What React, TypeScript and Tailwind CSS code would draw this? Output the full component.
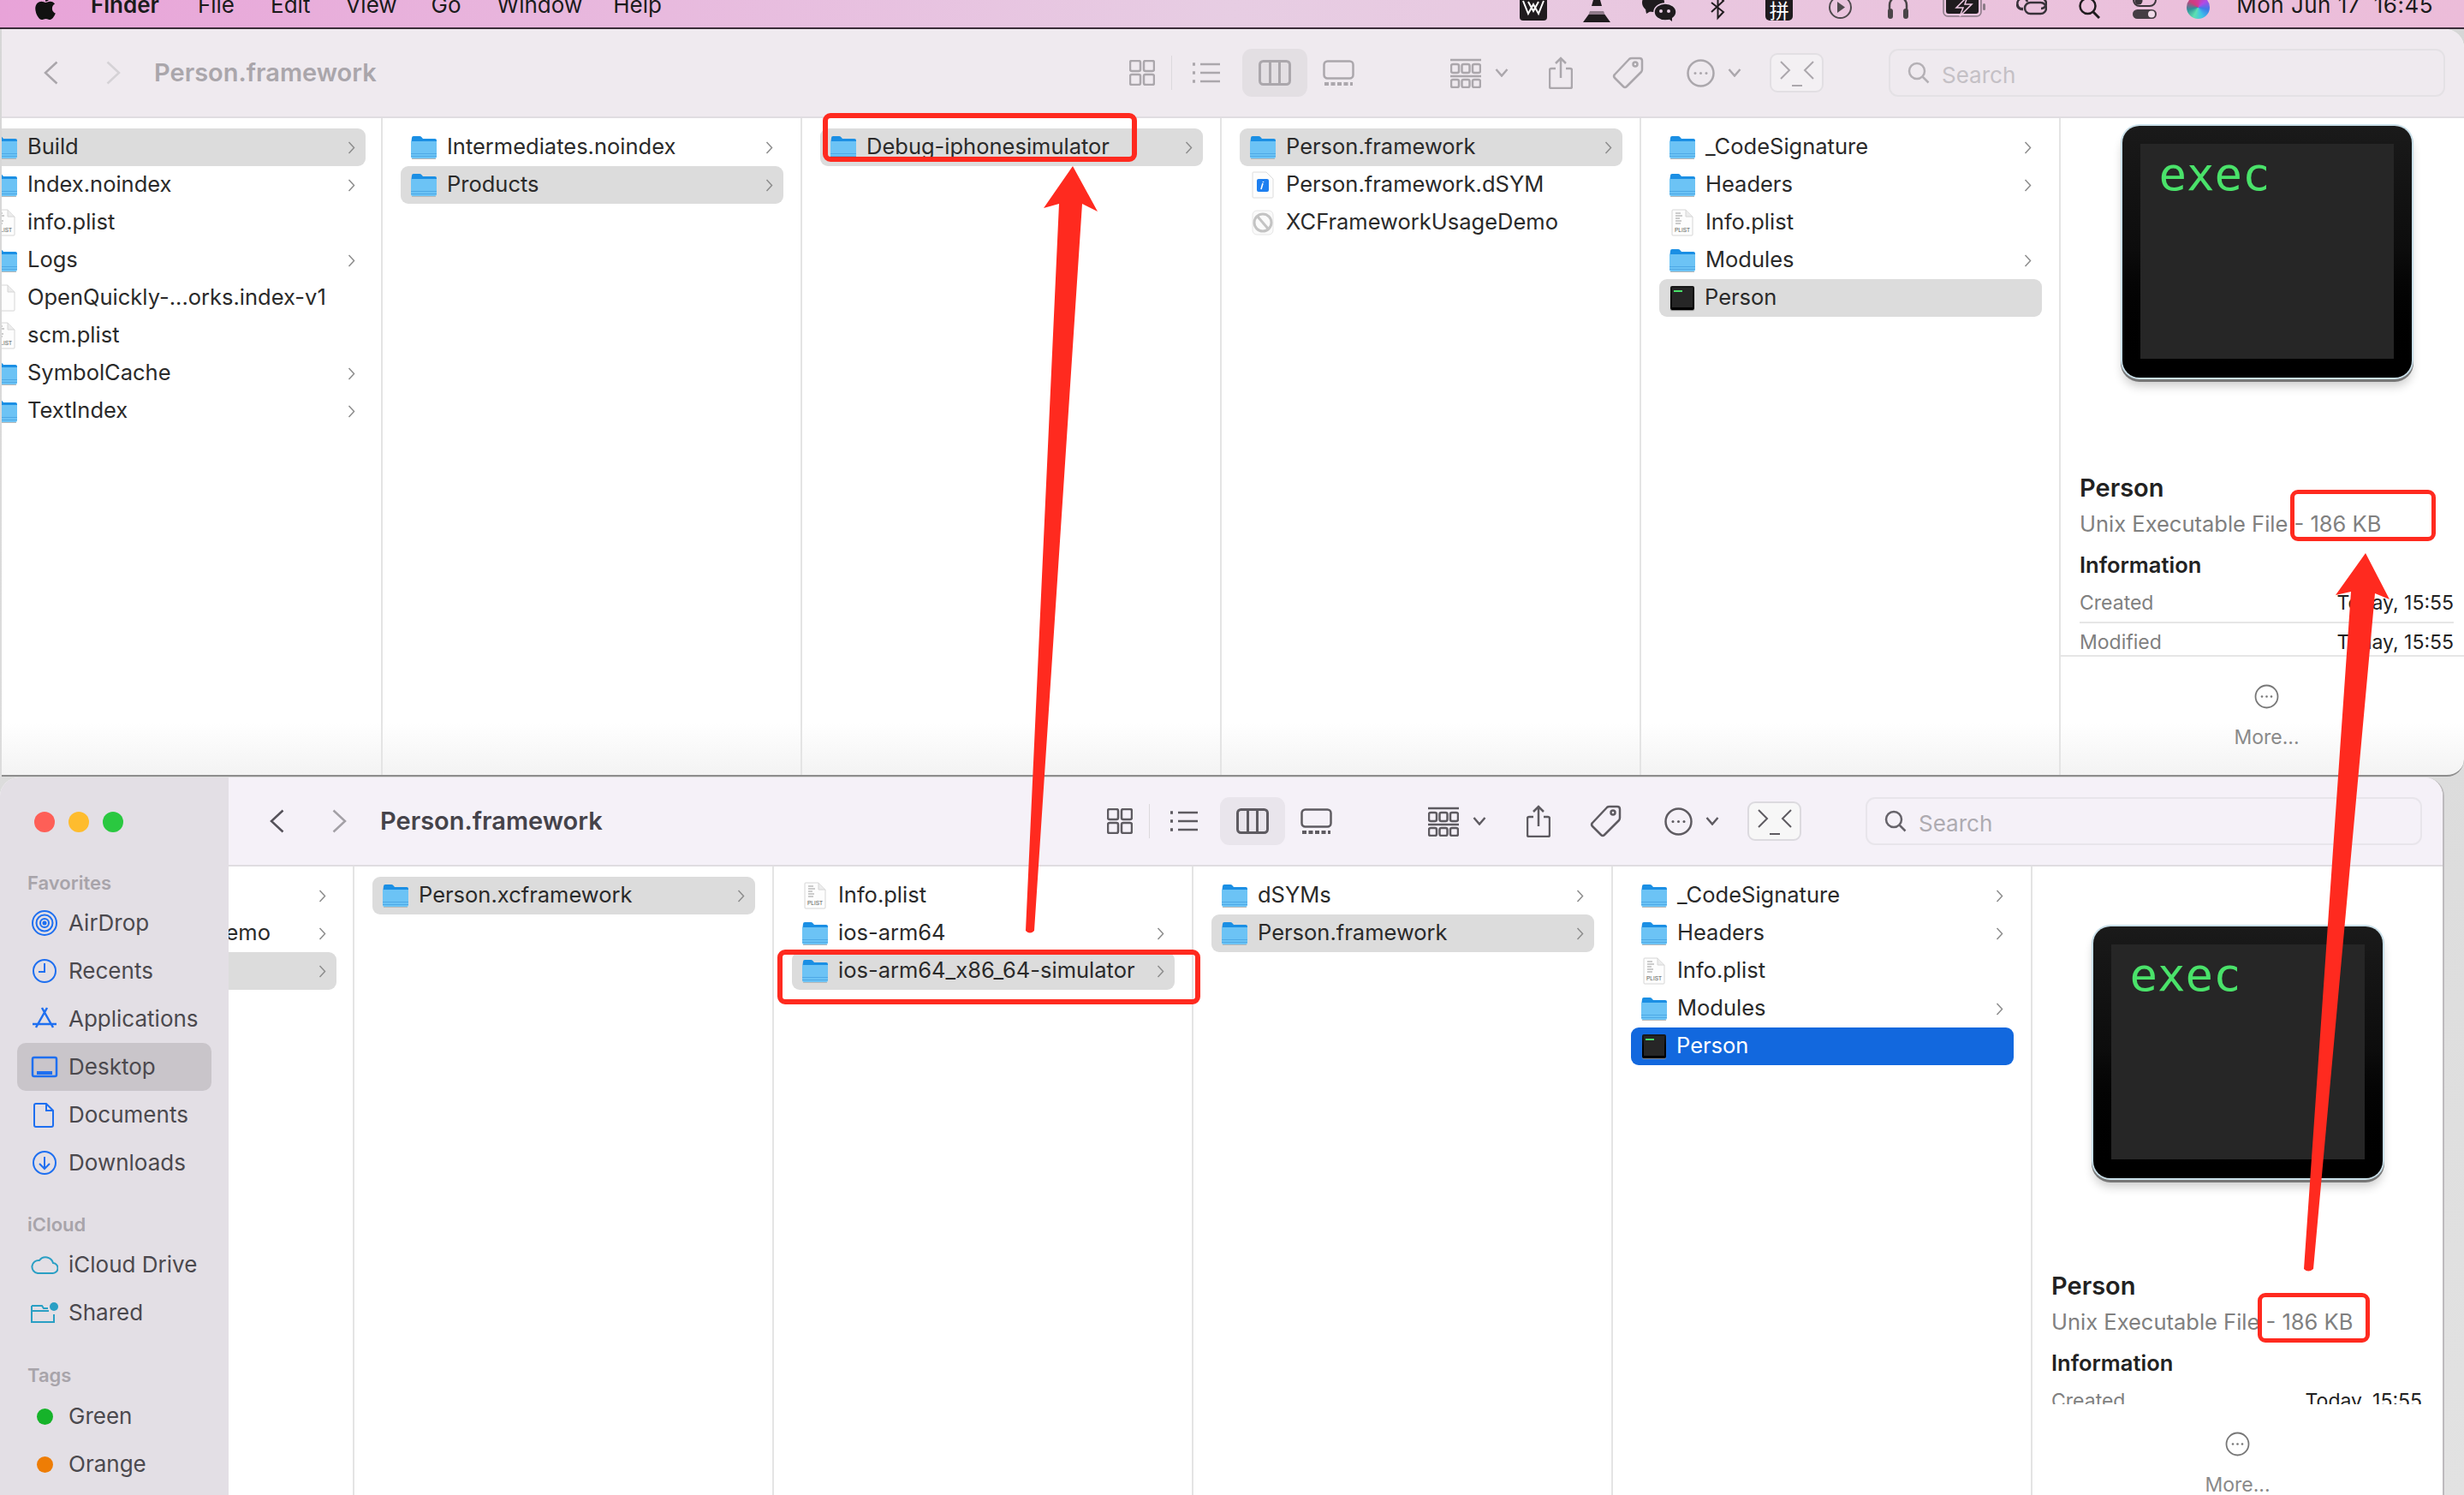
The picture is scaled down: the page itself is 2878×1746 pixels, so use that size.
import { FaApple } from "react-icons/fa";
import type { ReactNode } from "react";

const FONT = "font-['Inter','Noto_Sans',sans-serif]";

type Kind = "folder" | "plist" | "blank" | "dsym" | "blocked" | "exec";
type Item = { name: string; kind: Kind; arrow?: boolean; state?: "gray" | "blue" };

const finalColumn: Item[] = [
  { name: "_CodeSignature", kind: "folder", arrow: true },
  { name: "Headers", kind: "folder", arrow: true },
  { name: "Info.plist", kind: "plist" },
  { name: "Modules", kind: "folder", arrow: true },
];

function FolderIcon() {
  return (
    <svg width="30" height="28" viewBox="0 0 30 28" className="shrink-0">
      <path d="M1 3q0-2 2-2h7q1.500 0 2.500 1.200L14 4h14q2 0 2 2v5H0z" fill="#1b8fe4" />
      <path d="M0 7h30v18q0 2-2 2H2q-2 0-2-2z" fill="#6cc3f5" />
      <rect x="0" y="21" width="30" height="1" fill="#4ea9e6" />
      <rect x="0" y="24" width="30" height="1" fill="#4ea9e6" />
      <rect x="1" y="27" width="28" height="1" fill="#b9b9b9" />
    </svg>
  );
}

function DocIcon({ label, faded }: { label?: string; faded?: boolean }) {
  return (
    <svg width="30" height="32" viewBox="0 0 30 32" className="shrink-0">
      <path d="M4 1h15l8 8v21q0 1-1 1H4q-1 0-1-1V2q0-1 1-1z" fill="#fdfdfd" stroke="#d6d6d6" />
      <path d="M19 1v8h8" fill="#ececec" stroke="#d6d6d6" />
      {!faded && <path d="M7 5h6M7 8h8M7 11h5M7 14h7M7 17h6" stroke="#bcbcbc" strokeWidth="1.500" />}
      {label && (
        <text x="15" y="27" textAnchor="middle" fontSize="6.500" fill="#555" fontFamily="Liberation Sans, sans-serif">
          {label}
        </text>
      )}
    </svg>
  );
}

function FileIcon({ kind }: { kind: Kind }) {
  if (kind === "folder") return <FolderIcon />;
  if (kind === "plist") return <DocIcon label="PLIST" />;
  if (kind === "blank") return <DocIcon faded />;
  if (kind === "dsym")
    return (
      <svg width="30" height="32" viewBox="0 0 30 32" className="shrink-0">
        <path d="M4 1h15l8 8v21q0 1-1 1H4q-1 0-1-1V2q0-1 1-1z" fill="#fdfdfd" stroke="#dcdcdc" />
        <rect x="8" y="9" width="14" height="15" rx="2" fill="#1d7ff0" />
        <path d="M13 21l2-7M15.500 12v1" stroke="#fff" strokeWidth="1.600" />
      </svg>
    );
  if (kind === "blocked")
    return (
      <svg width="30" height="32" viewBox="0 0 30 32" className="shrink-0">
        <rect x="3" y="2" width="24" height="28" rx="5" fill="#fafafa" stroke="#e6e6e6" />
        <circle cx="15" cy="16" r="10" fill="none" stroke="#c3c3c3" strokeWidth="3" />
        <path d="M9 9l12 14" stroke="#c3c3c3" strokeWidth="3" />
      </svg>
    );
  return (
    <div className="relative ml-[1px] h-[28px] w-[28px] shrink-0 rounded-[2px] bg-gradient-to-b from-[#1a1a1a] to-black shadow-[0_1px_1px_#888]">
      <div className="absolute inset-x-[2px] bottom-[3px] top-[2px] bg-[#262626]" />
      <div className="absolute left-[4px] top-[5px] h-[2px] w-[10px] bg-[#4ae26a]" />
    </div>
  );
}

function Row({ item }: { item: Item }) {
  const bg = item.state === "gray" ? "bg-[#dcdcdc]" : item.state === "blue" ? "bg-[#1268de]" : "";
  const fg = item.state === "blue" ? "text-white" : "text-[#2a2a2a]";
  return (
    <div className={`ml-[21px] mr-[20px] flex h-[44px] items-center rounded-[9px] pl-[12px] pr-[12px] ${bg}`}>
      <FileIcon kind={item.kind} />
      <span className={`mb-[3px] ml-[12px] min-w-0 flex-1 whitespace-nowrap text-[25.500px] leading-[30px] ${fg}`}>{item.name}</span>
      {item.arrow && (
        <svg width="9" height="15" viewBox="0 0 9 15" fill="none" stroke="#8c8c8c" strokeWidth="1.500" className="shrink-0">
          <path d="M1.500 1l6 6.500-6 6.500" />
        </svg>
      )}
    </div>
  );
}

function Column({ items, className = "" }: { items: Item[]; className?: string }) {
  return (
    <div className={`w-[490px] shrink-0 border-r-2 border-[#e4e4e4] pt-[12px] ${className}`}>
      {items.map((it) => (
        <Row key={it.name} item={it} />
      ))}
    </div>
  );
}

function ExecIcon() {
  return (
    <div className="relative mt-[2px] h-[294px] w-[338px] rounded-[20px] bg-gradient-to-b from-[#1a1a1a] via-[#0c0c0c] to-black shadow-[0_0_0_2px_#c9e0ea,0_3px_0_2px_#777,0_10px_12px_rgba(0,0,0,0.2)]">
      <div className="absolute bottom-[22px] left-[21px] right-[21px] top-[21px] bg-[#262626]">
        <span className="absolute left-[22px] top-[6px] font-['DejaVu_Sans_Mono',monospace] text-[54px] leading-[60px] text-[#4ae26a]">
          exec
        </span>
      </div>
    </div>
  );
}

function ToolIcon({ children, w, h, className = "" }: { children: ReactNode; w: number; h: number; className?: string }) {
  return (
    <svg width={w} height={h} viewBox={`0 0 ${w} ${h}`} fill="none" stroke="currentColor" strokeWidth="2.500" className={`shrink-0 ${className}`}>
      {children}
    </svg>
  );
}

function Toolbar({ active }: { active: boolean }) {
  const icon = active ? "text-[#5e5b61]" : "text-[#aba7ac]";
  return (
    <div className={`flex h-[104px] shrink-0 items-center justify-between border-b-2 border-[#e0dde1] ${active ? "bg-[#f5f1f8] pl-[48px] pr-[24px]" : "bg-[#efeaef] pl-[49px] pr-[22px]"}`}>
      <div className="flex items-center">
        <ToolIcon w={17} h={28} className={active ? "text-[#55525a]" : "text-[#aaa6ab]"}>
          <path d="M15.500 1.500L2 14l13.500 12.500" />
        </ToolIcon>
        <ToolIcon w={17} h={28} className={`ml-[56px] ${active ? "text-[#a3a0a6]" : "text-[#d5d2d6]"}`}>
          <path d="M1.500 1.500L15 14 1.500 26.500" />
        </ToolIcon>
        <span className={`ml-[39px] text-[29px] font-semibold ${active ? "text-[#45434a]" : "text-[#aaa6ab]"}`}>Person.framework</span>
      </div>
      <div className={`flex items-center ${icon}`}>
        <ToolIcon w={30} h={30}>
          <rect x="1" y="1" width="12" height="12" rx="2" />
          <rect x="17" y="1" width="12" height="12" rx="2" />
          <rect x="1" y="17" width="12" height="12" rx="2" />
          <rect x="17" y="17" width="12" height="12" rx="2" />
        </ToolIcon>
        <div className="ml-[19px] h-[40px] w-[1px] bg-[#dcd9dd]" />
        <ToolIcon w={33} h={24} className="ml-[23px]">
          <path d="M10 2h23M10 12h23M10 22h23" />
          <path d="M1 2h3M1 12h3M1 22h3" strokeWidth="3.500" />
        </ToolIcon>
        <div className={`ml-[26px] flex h-[56px] w-[76px] items-center justify-center rounded-[11px] ${active ? "bg-[#e9e5ec]" : "bg-[#e3dfe3]"}`}>
          <ToolIcon w={38} h={30}>
            <rect x="1.500" y="1.500" width="35" height="27" rx="4" strokeWidth="3" />
            <path d="M13.500 1v28M24.500 1v28" strokeWidth="3" />
          </ToolIcon>
        </div>
        <ToolIcon w={37} h={30} className="ml-[18px]">
          <rect x="1.500" y="1.500" width="34" height="20" rx="4" />
          <path d="M2 28h33" strokeWidth="4" strokeDasharray="5 2.500" />
        </ToolIcon>
        <ToolIcon w={36} h={35} className="ml-[112px]">
          <path d="M0 2h36M0 21h36" strokeWidth="2.500" />
          <rect x="1" y="7" width="9" height="10" rx="2" />
          <rect x="13.500" y="7" width="9" height="10" rx="2" />
          <rect x="26" y="7" width="9" height="10" rx="2" />
          <rect x="1" y="25" width="9" height="9" rx="2" />
          <rect x="13.500" y="25" width="9" height="9" rx="2" />
          <rect x="26" y="25" width="9" height="9" rx="2" />
        </ToolIcon>
        <ToolIcon w={16} h={10} className="ml-[16px]">
          <path d="M1.500 1l6.500 7.500L14.500 1" />
        </ToolIcon>
        <ToolIcon w={28} h={38} className="ml-[47px]">
          <path d="M8 14H3q-2 0-2 2v19q0 2 2 2h22q2 0 2-2V16q0-2-2-2h-5" />
          <path d="M14 25V2M8 8l6-6 6 6" />
        </ToolIcon>
        <ToolIcon w={37} h={38} className="ml-[46px]">
          <path d="M23 2h9q3 0 3 3v10q0 2-1 3L17 35q-2 2-4 0L3 25q-2-2 0-4L20 3q1-1 3-1z" />
          <circle cx="27" cy="9" r="2.500" />
        </ToolIcon>
        <ToolIcon w={33} h={33} className="ml-[50px]">
          <circle cx="16.500" cy="16.500" r="15" />
          <circle cx="10" cy="16.500" r="1.500" fill="currentColor" stroke="none" />
          <circle cx="16.500" cy="16.500" r="1.500" fill="currentColor" stroke="none" />
          <circle cx="23" cy="16.500" r="1.500" fill="currentColor" stroke="none" />
        </ToolIcon>
        <ToolIcon w={16} h={10} className="ml-[15px]">
          <path d="M1.500 1l6.500 7.500L14.500 1" />
        </ToolIcon>
        <div className={`ml-[33px] flex h-[46px] w-[63px] items-center justify-center rounded-[9px] border-2 ${active ? "border-[#dcdadf] bg-[#f7f7f7]" : "border-[#e2dfe3] bg-[#f3f0f3]"}`}>
          <ToolIcon w={44} h={34}>
            <path d="M3 4l10 10L3 24M41 4L31 14l10 10M16 32h12" strokeWidth="2" />
          </ToolIcon>
        </div>
        <div className={`flex h-[56px] w-[650px] items-center rounded-[11px] border-2 pl-[20px] ${active ? "ml-[75px] border-[#e8e5eb]" : "ml-[76px] border-[#e4e1e5]"}`}>
          <svg width="26" height="26" viewBox="0 0 26 26" fill="none" stroke="currentColor" strokeWidth="2.500" className={active ? "text-[#66636a]" : "text-[#b4b0b5]"}>
            <circle cx="11" cy="11" r="9" />
            <path d="M17.500 17.500l7 7" />
          </svg>
          <span className={`ml-[14px] mt-[4px] text-[26px] ${active ? "text-[#aeabb1]" : "text-[#c4c0c5]"}`}>Search</span>
        </div>
      </div>
    </div>
  );
}

function Preview({ active }: { active: boolean }) {
  return (
    <div className="flex min-w-0 flex-1 flex-col">
      <div className={`flex shrink-0 justify-center ${active ? "h-[468px] pt-[68px]" : "h-[410px] pl-[10px] pt-[7px]"}`}>
        <ExecIcon />
      </div>
      <div className={`shrink-0 overflow-hidden ${active ? "h-[160px] pl-[22px] pr-[24px]" : "h-[219px] border-b-2 border-[#e6e6e6] pl-[22px] pr-[12px]"}`}>
        <div className="flex h-[44px] items-center text-[29px] font-semibold text-[#222]">Person</div>
        <div className="flex h-[40px] items-center text-[25.500px] text-[#808080]">Unix Executable File - 186 KB</div>
        <div className="mt-[6px] flex h-[44px] items-center text-[25.500px] font-semibold text-[#222]">Information</div>
        <div className="flex h-[46px] items-center justify-between border-b-2 border-[#e6e6e6] text-[23px]">
          <span className="text-[#808080]">Created</span>
          <span className="text-[#222]">Today, 15:55</span>
        </div>
        <div className="flex h-[44px] items-center justify-between text-[23px]">
          <span className="text-[#808080]">Modified</span>
          <span className="text-[#222]">Today, 15:55</span>
        </div>
      </div>
      <div className={`flex flex-col items-center pt-[32px] ${active ? "" : "pl-[10px]"}`}>
        <svg width="29" height="29" viewBox="0 0 29 29" fill="none" stroke="#777" strokeWidth="1.800">
          <circle cx="14.500" cy="14.500" r="13" />
          <circle cx="9" cy="14.500" r="1.300" fill="#777" stroke="none" />
          <circle cx="14.500" cy="14.500" r="1.300" fill="#777" stroke="none" />
          <circle cx="20" cy="14.500" r="1.300" fill="#777" stroke="none" />
        </svg>
        <span className="mt-[22px] text-[23px] leading-none text-[#8a8a8a]">More...</span>
      </div>
    </div>
  );
}

function SidebarHeading({ children, className }: { children: ReactNode; className: string }) {
  return <div className={`ml-[32px] text-[22px] font-semibold leading-none text-[#a8a4aa] ${className}`}>{children}</div>;
}

function SidebarItem({ label, icon, selected }: { label: string; icon: ReactNode; selected?: boolean }) {
  return (
    <div className={`mx-[20px] flex h-[56px] items-center rounded-[10px] ${selected ? "bg-[#c9c5ca]" : ""}`}>
      <div className="flex w-[60px] shrink-0 justify-center pl-[4px]">{icon}</div>
      <span className="mb-[2px] text-[26px] text-[#4b494e]">{label}</span>
    </div>
  );
}

function SideIcon({ children, color = "text-[#1e6ff0]" }: { children: ReactNode; color?: string }) {
  return (
    <svg width="32" height="32" viewBox="0 0 32 32" fill="none" stroke="currentColor" strokeWidth="2" className={color}>
      {children}
    </svg>
  );
}

function Sidebar() {
  return (
    <div className="flex w-[267px] shrink-0 flex-col bg-[#e3dfe5]">
      <div className="flex h-[104px] shrink-0 items-center gap-[16px] pl-[40px]">
        <div className="h-[24px] w-[24px] rounded-full bg-[#fe5f57]" />
        <div className="h-[24px] w-[24px] rounded-full bg-[#febc2e]" />
        <div className="h-[24px] w-[24px] rounded-full bg-[#2ac840]" />
      </div>
      <SidebarHeading className="mt-[8px]">Favorites</SidebarHeading>
      <div className="mt-[8px]">
        <SidebarItem label="AirDrop" icon={<SideIcon><circle cx="16" cy="16" r="14" /><circle cx="16" cy="16" r="9.500" /><circle cx="16" cy="16" r="5" /><circle cx="16" cy="16" r="1.500" fill="currentColor" /></SideIcon>} />
        <SidebarItem label="Recents" icon={<SideIcon><circle cx="16" cy="16" r="13" /><path d="M16 7v10H9" /></SideIcon>} />
        <SidebarItem label="Applications" icon={<SideIcon><path d="M19 3L6 26M13 3l13 23M2 22h28" strokeWidth="2.500" /></SideIcon>} />
        <SidebarItem selected label="Desktop" icon={<SideIcon><rect x="2" y="5" width="28" height="22" rx="2" strokeWidth="2.500" /><path d="M7 23h18" strokeWidth="4" /></SideIcon>} />
        <SidebarItem label="Documents" icon={<SideIcon><path d="M6 3h12l8 8v17q0 2-2 2H6q-2 0-2-2V5q0-2 2-2zM18 3v8h8" /></SideIcon>} />
        <SidebarItem label="Downloads" icon={<SideIcon><circle cx="16" cy="16" r="13" /><path d="M16 9v14M10 17l6 6 6-6" /></SideIcon>} />
      </div>
      <SidebarHeading className="mt-[33px]">iCloud</SidebarHeading>
      <div className="mt-[8px]">
        <SidebarItem label="iCloud Drive" icon={<SideIcon color="text-[#2a9fc4]"><path d="M8 26h17a6 6 0 0 0 1-12 9 9 0 0 0-16-3 7 7 0 0 0-2 15z" /></SideIcon>} />
        <SidebarItem label="Shared" icon={<SideIcon color="text-[#2a9fc4]"><path d="M1 8h12l2 3h5M1 8v19h26v-9M1 14h20" /><circle cx="27" cy="9" r="5" fill="currentColor" stroke="none" /></SideIcon>} />
      </div>
      <SidebarHeading className="mt-[34px]">Tags</SidebarHeading>
      <div className="mt-[9px]">
        <SidebarItem label="Green" icon={<div className="h-[19px] w-[19px] rounded-full bg-[#16b32a]" />} />
        <SidebarItem label="Orange" icon={<div className="h-[19px] w-[19px] rounded-full bg-[#ee7d05]" />} />
      </div>
    </div>
  );
}

function MenuBar() {
  return (
    <div className="relative flex h-[34px] shrink-0 items-start overflow-hidden border-b-2 border-[#3a2c38] bg-gradient-to-r from-[#e8a3d8] via-[#e7cde3] to-[#ecbcd9] text-[26px] leading-[30px] text-[#1b1b1b]">
      <FaApple size={32} className="ml-[37px] mt-[-7px] shrink-0 text-[#111]" />
      <div className="ml-[37px] mt-[-9px] flex">
        <span className="font-semibold">Finder</span>
        <span className="ml-[45px]">File</span>
        <span className="ml-[42px]">Edit</span>
        <span className="ml-[41px]">View</span>
        <span className="ml-[40px]">Go</span>
        <span className="ml-[42px]">Window</span>
        <span className="ml-[36px]">Help</span>
      </div>
      <div className="ml-auto mr-[36px] flex items-start">
        <MenuIcons />
        <span className="ml-[31px] mt-[-9px] whitespace-pre tracking-[0.5px]">Mon Jun 17  16:45</span>
      </div>
    </div>
  );
}

function MenuIcons() {
  return (
    <div className="flex items-start">
      <svg width="32" height="26" viewBox="0 0 32 26">
        <rect x="0" y="-8" width="32" height="32" rx="4" fill="#1f1b1e" />
        <path d="M4 1l6 15 6-11 6 11 6-15M10 2l6 11 6-11" fill="none" stroke="#fff" strokeWidth="2" />
      </svg>
      <svg width="32" height="26" viewBox="0 0 32 26" className="ml-[42px]">
        <path d="M12 0h8l2 7H10z" fill="#1f1b1e" />
        <path d="M10 7h12l2 6H8z" fill="#e4c5dd" />
        <path d="M8 13h16l1.500 4h-19z" fill="#8f7a8a" />
        <path d="M6.500 17h19L32 26H0z" fill="#1f1b1e" />
      </svg>
      <svg width="40" height="26" viewBox="0 0 40 26" className="ml-[37px]">
        <ellipse cx="13" cy="3" rx="13" ry="11" fill="#1f1b1e" />
        <path d="M4 11l1 5 5-3z" fill="#1f1b1e" />
        <ellipse cx="27" cy="14" rx="13" ry="10" fill="#1f1b1e" stroke="#e7cde3" strokeWidth="1.500" />
        <path d="M31 22l4 3v-6z" fill="#1f1b1e" />
        <circle cx="22" cy="13" r="2" fill="#e7cde3" />
        <circle cx="31" cy="13" r="2" fill="#e7cde3" />
      </svg>
      <svg width="17" height="24" viewBox="0 0 17 24" fill="none" stroke="#1f1b1e" strokeWidth="2" className="ml-[40px]">
        <path d="M1 3l14 11-6.500 7V-6L15 1 1 14" />
      </svg>
      <div className="ml-[47px] flex h-[24px] w-[32px] items-end justify-center overflow-hidden rounded-b-[5px] bg-[#1f1b1e] font-['Noto_Sans_CJK_SC',sans-serif] text-[23px] leading-[26px] text-white">
        拼
      </div>
      <svg width="27" height="24" viewBox="0 0 27 24" fill="none" stroke="#4f4a4e" strokeWidth="2" className="ml-[42px]">
        <circle cx="13.500" cy="8.500" r="12.500" />
        <path d="M10 2l9 6.500-9 6.500z" fill="#4f4a4e" stroke="none" />
      </svg>
      <svg width="26" height="24" viewBox="0 0 26 24" fill="none" stroke="#4a4448" strokeWidth="2.500" className="ml-[41px]">
        <path d="M3 14V6a10 10 0 0 1 20 0v8" />
        <rect x="1" y="10" width="6" height="12" rx="3" fill="#4a4448" stroke="none" />
        <rect x="19" y="10" width="6" height="12" rx="3" fill="#4a4448" stroke="none" />
      </svg>
      <svg width="51" height="24" viewBox="0 0 51 24" className="ml-[39px]">
        <rect x="1" y="-6" width="44" height="25" rx="5" fill="none" stroke="#8a7a86" strokeWidth="1.500" />
        <rect x="4" y="-4" width="38" height="20" rx="3" fill="#1f1b1e" />
        <rect x="47" y="4" width="3" height="8" rx="1.500" fill="#8a7a86" />
        <path d="M29 -4L16 9h8l-4 10 14-14h-8z" fill="#1f1b1e" stroke="#efc9e3" strokeWidth="1.500" />
      </svg>
      <svg width="36" height="24" viewBox="0 0 36 24" fill="none" stroke="#38323a" strokeWidth="2.500" className="ml-[35px]">
        <path d="M8 10a6 6 0 1 1 5-8M26 -2h3a6 6 0 0 1 0 12" />
        <rect x="10" y="3" width="25" height="13" rx="6.500" />
        <path d="M1 5a6 6 0 0 0 7 6" />
      </svg>
      <svg width="25" height="24" viewBox="0 0 25 24" fill="none" stroke="#1f1b1e" strokeWidth="2.500" className="ml-[37px]">
        <circle cx="10.500" cy="7" r="9" />
        <path d="M17 14l7 7" strokeWidth="3" />
      </svg>
      <svg width="28" height="24" viewBox="0 0 28 24" className="ml-[38px]">
        <rect x="1" y="-7" width="26" height="14" rx="7" fill="none" stroke="#3c353b" strokeWidth="2" />
        <circle cx="7" cy="1" r="4.500" fill="#3c353b" />
        <rect x="0" y="11" width="28" height="11" rx="5.500" fill="#453d44" />
        <circle cx="22" cy="16.500" r="4" fill="#f0dbe9" />
      </svg>
      <div className="ml-[35px] mt-[-5px] h-[27px] w-[27px] rounded-full bg-[conic-gradient(#d13c9c,#b04ae8,#3f7ae8,#3fc2e8,#5ee0b0,#2f8f9a,#d13c7c,#d13c9c)]" />
    </div>
  );
}

function Annotations() {
  const boxes = [
    "left-[961px] top-[132px] h-[57px] w-[367px] border-[6px]",
    "left-[2675px] top-[572px] h-[60px] w-[170px] border-[5px]",
    "left-[908px] top-[1109px] h-[64px] w-[494px] border-[6px]",
    "left-[2637px] top-[1510px] h-[58px] w-[131px] border-[5px]",
  ];
  return (
    <>
      {boxes.map((b) => (
        <div key={b} className={`absolute rounded-[9px] border-[#ff2a1f] ${b}`} />
      ))}
      <svg width="2878" height="1746" viewBox="0 0 2878 1746" className="pointer-events-none absolute left-0 top-0">
        <path d="M1253 194L1282 247L1264 238L1208 1087Q1203 1092 1198 1087L1237 238L1219 243Z" fill="#ff2a1f" />
        <path d="M2763 646L2791 700L2774 693L2702 1482Q2696 1487 2691 1482L2746 691L2728 695Z" fill="#ff2a1f" />
      </svg>
    </>
  );
}

export default function App() {
  return (
    <div className={`relative flex h-[1746px] w-[2878px] flex-col overflow-hidden bg-gradient-to-b from-[#d6d6d6] to-[#e2e2e2] ${FONT}`}>
      <MenuBar />

      {/* back window */}
      <div className="ml-[2px] flex h-[873px] shrink-0 flex-col overflow-hidden rounded-br-[20px] rounded-tr-[22px] border-b-2 border-[#8d8d8d] bg-gradient-to-b from-white from-[93%] to-[#f3f3f3]">
        <Toolbar active={false} />
        <div className="flex min-h-0 flex-1">
          <div className="w-[445px] shrink-0 overflow-hidden border-r-2 border-[#e4e4e4]">
            <Column
              className="ml-[-45px] !border-r-0"
              items={[
                { name: "Build", kind: "folder", arrow: true, state: "gray" },
                { name: "Index.noindex", kind: "folder", arrow: true },
                { name: "info.plist", kind: "plist" },
                { name: "Logs", kind: "folder", arrow: true },
                { name: "OpenQuickly-...orks.index-v1", kind: "blank" },
                { name: "scm.plist", kind: "plist" },
                { name: "SymbolCache", kind: "folder", arrow: true },
                { name: "TextIndex", kind: "folder", arrow: true },
              ]}
            />
          </div>
          <Column
            items={[
              { name: "Intermediates.noindex", kind: "folder", arrow: true },
              { name: "Products", kind: "folder", arrow: true, state: "gray" },
            ]}
          />
          <Column items={[{ name: "Debug-iphonesimulator", kind: "folder", arrow: true, state: "gray" }]} />
          <Column
            items={[
              { name: "Person.framework", kind: "folder", arrow: true, state: "gray" },
              { name: "Person.framework.dSYM", kind: "dsym" },
              { name: "XCFrameworkUsageDemo", kind: "blocked" },
            ]}
          />
          <Column items={[...finalColumn, { name: "Person", kind: "exec", state: "gray" }]} />
          <Preview active={false} />
        </div>
      </div>

      {/* front window */}
      <div className="mt-[1px] flex min-h-0 w-[2855px] flex-1 overflow-hidden rounded-t-[22px] border-r-2 border-[#bdbabd] bg-white">
        <Sidebar />
        <div className="flex min-w-0 flex-1 flex-col">
          <Toolbar active />
          <div className="flex min-h-0 flex-1">
            <div className="w-[147px] shrink-0 overflow-hidden border-r-2 border-[#e4e4e4]">
              <Column
                className="ml-[-344px] !border-r-0"
                items={[
                  { name: "Build", kind: "folder", arrow: true },
                  { name: "XCFrameworkUsageDemo", kind: "folder", arrow: true },
                  { name: "Products", kind: "folder", arrow: true, state: "gray" },
                ]}
              />
            </div>
            <Column items={[{ name: "Person.xcframework", kind: "folder", arrow: true, state: "gray" }]} />
            <Column
              items={[
                { name: "Info.plist", kind: "plist" },
                { name: "ios-arm64", kind: "folder", arrow: true },
                { name: "ios-arm64_x86_64-simulator", kind: "folder", arrow: true, state: "gray" },
              ]}
            />
            <Column
              items={[
                { name: "dSYMs", kind: "folder", arrow: true },
                { name: "Person.framework", kind: "folder", arrow: true, state: "gray" },
              ]}
            />
            <Column items={[...finalColumn, { name: "Person", kind: "exec", state: "blue" }]} />
            <Preview active />
          </div>
        </div>
      </div>

      <Annotations />
    </div>
  );
}
